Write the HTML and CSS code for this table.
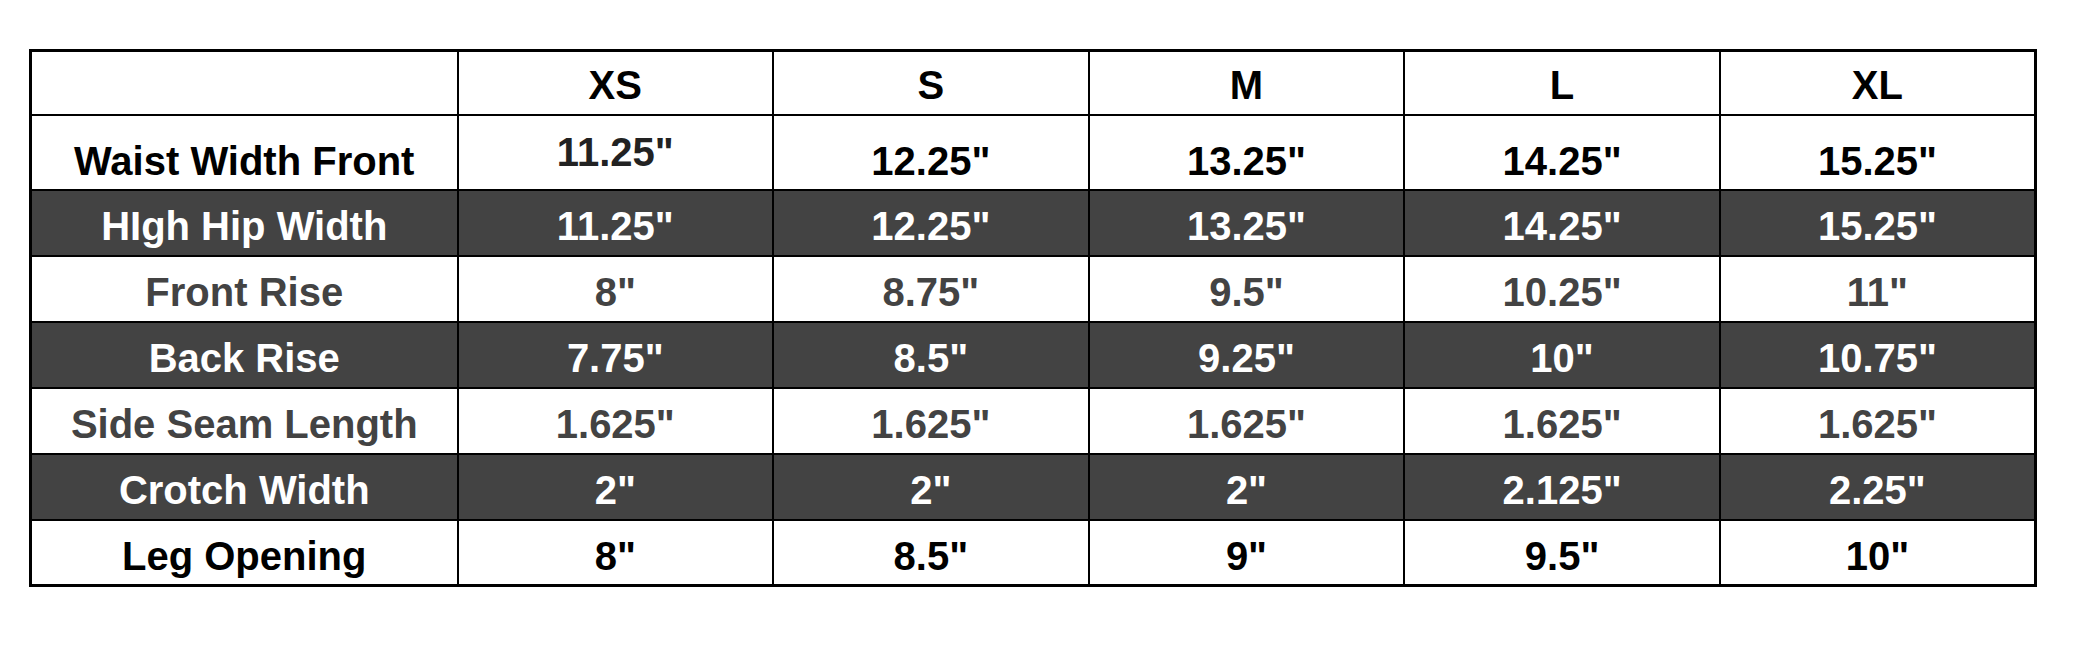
FILE: index.html
```html
<!DOCTYPE html>
<html lang="en">
<head>
<meta charset="utf-8">
<title>Size Chart</title>
<link rel="stylesheet" href="styles.css">
</head>
<body>
<div class="page">
  <table class="chart">
    <colgroup>
      <col class="c-label">
      <col class="c-size"><col class="c-size"><col class="c-size"><col class="c-size"><col class="c-size">
    </colgroup>
    <tr class="r-head">
      <td></td><td>XS</td><td>S</td><td>M</td><td>L</td><td>XL</td>
    </tr>
    <tr class="r-waist">
      <td>Waist Width Front</td><td class="v-xs">11.25"</td><td>12.25"</td><td>13.25"</td><td>14.25"</td><td>15.25"</td>
    </tr>
    <tr class="r-dark">
      <td>HIgh Hip Width</td><td>11.25"</td><td>12.25"</td><td>13.25"</td><td>14.25"</td><td>15.25"</td>
    </tr>
    <tr class="r-grey">
      <td>Front Rise</td><td>8"</td><td>8.75"</td><td>9.5"</td><td>10.25"</td><td>11"</td>
    </tr>
    <tr class="r-dark">
      <td>Back Rise</td><td>7.75"</td><td>8.5"</td><td>9.25"</td><td>10"</td><td>10.75"</td>
    </tr>
    <tr class="r-grey">
      <td>Side Seam Length</td><td>1.625"</td><td>1.625"</td><td>1.625"</td><td>1.625"</td><td>1.625"</td>
    </tr>
    <tr class="r-dark">
      <td>Crotch Width</td><td>2"</td><td>2"</td><td>2"</td><td>2.125"</td><td>2.25"</td>
    </tr>
    <tr class="r-light">
      <td>Leg Opening</td><td>8"</td><td>8.5"</td><td>9"</td><td>9.5"</td><td>10"</td>
    </tr>
  </table>
</div>
</body>
</html>
```
FILE: styles.css
```css
html, body {
  margin: 0;
  padding: 0;
  background: #ffffff;
}

.page {
  padding: 49px 0 0 29px;
}

.chart {
  border-collapse: collapse;
  table-layout: fixed;
  width: 2005px;
  border: 3px solid #000;
  font-family: "Liberation Sans", Arial, sans-serif;
  font-weight: bold;
  font-size: 40px;
  color: #000;
}

.c-label { width: 427px; }
.c-size { width: 315.6px; }

.chart td {
  border: 2px solid #000;
  text-align: center;
  vertical-align: middle;
  padding: 7px 0 0 0;
  line-height: 46px;
  white-space: nowrap;
}

.r-head { height: 64px; }
.r-head td { padding-top: 5px; }

.r-waist { height: 75px; }
.r-waist td { padding-top: 18px; }
.r-waist td.v-xs {
  padding-top: 0;
  color: #222;
}

.r-dark, .r-grey, .r-light { height: 66px; }

.r-dark td {
  background: #434343;
  color: #ffffff;
}

.r-grey td {
  color: #434343;
}

.r-light td {
  color: #000;
}
```
